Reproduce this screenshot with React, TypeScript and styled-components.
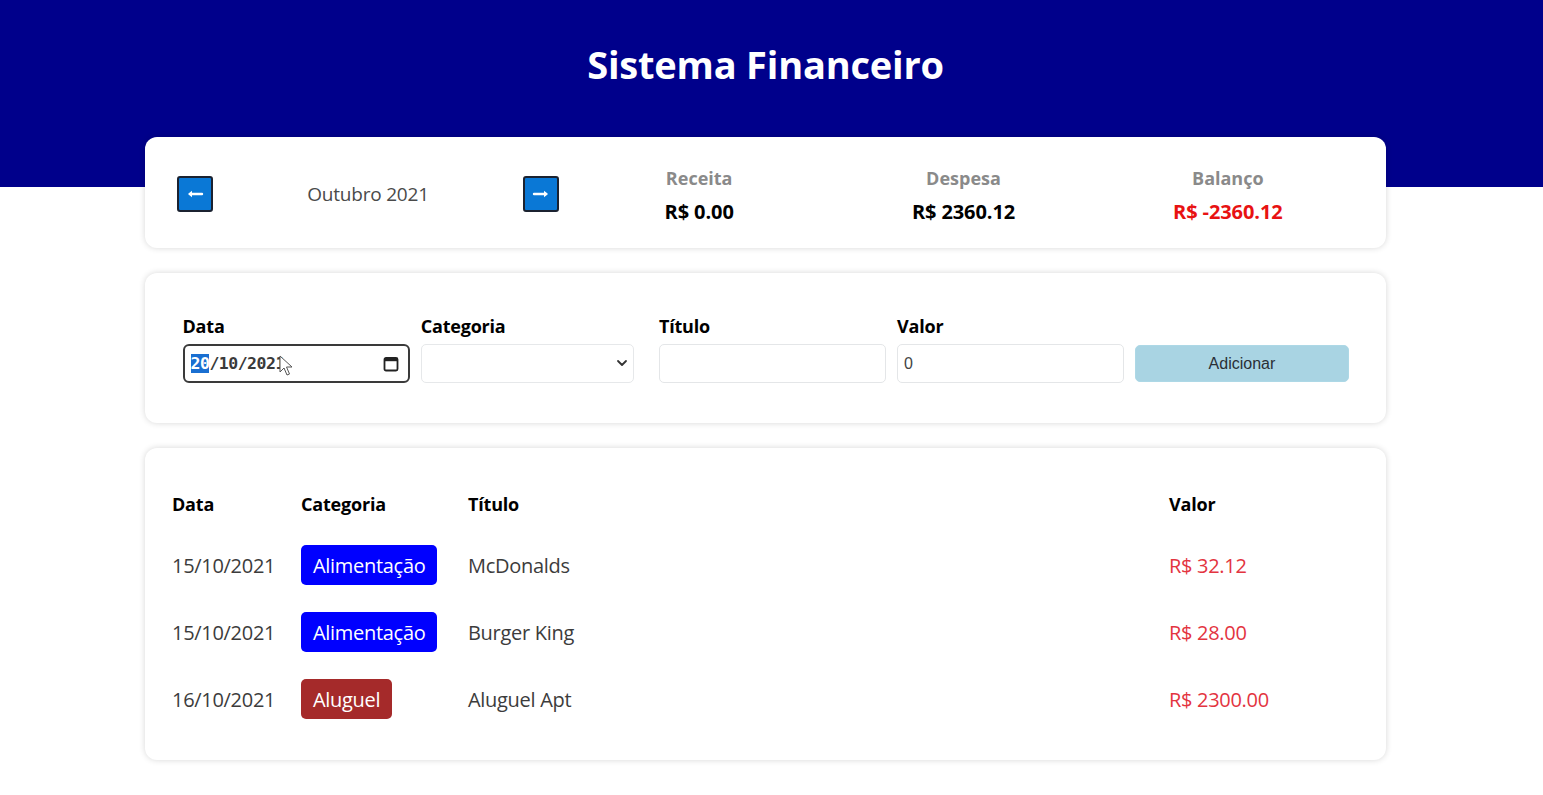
import React from "react";
import styled, { createGlobalStyle } from "styled-components";

const GlobalStyle = createGlobalStyle`
  html, body { margin: 0; padding: 0; background: #ffffff; }
  body { font-family: "Open Sans", "Noto Sans", Arial, sans-serif; color: #000; }
  * { box-sizing: border-box; }
`;

const Header = styled.header`
  background: #00008b;
  height: 187px;
  padding: 37px 12px 0 0;
  text-align: center;
`;

const HeaderTitle = styled.h1`
  margin: 0;
  color: #ffffff;
  font-size: 38px;
  font-weight: 700;
  line-height: 54px;
  letter-spacing: -0.2px;
`;

const Main = styled.main`
  padding-right: 12px;
`;

const Body = styled.div`
  width: 1241px;
  margin: -50px auto 40px;
  display: flex;
  flex-direction: column;
  gap: 25px;
`;

const Card = styled.section`
  background: #ffffff;
  border-radius: 12px;
  box-shadow: 0 0 6px rgba(0, 0, 0, 0.16);
`;

const InfoCard = styled(Card)`
  height: 111px;
  padding: 0 26px 0 30px;
  display: grid;
  grid-template-columns: 386px 1fr;
  column-gap: 6px;
  align-items: center;
`;

const MonthArea = styled.div`
  display: flex;
  align-items: center;
  padding-top: 2px;
`;

const MonthArrow = styled.div`
  width: 40px;
  display: flex;
  justify-content: center;
  cursor: pointer;
`;

const ArrowBox = styled.span`
  width: 36px;
  height: 36px;
  border-radius: 3px;
  background: #0a78d6;
  border: 2px solid #1b2230;
  display: flex;
  align-items: center;
  justify-content: center;
`;

const MonthTitle = styled.div`
  flex: 1;
  text-align: center;
  font-size: 19px;
  color: #4a4a4a;
  letter-spacing: -0.2px;
`;

const ResumeArea = styled.div`
  display: flex;
  padding-top: 4px;
`;

const ResumeItem = styled.div`
  flex: 1;
  text-align: center;
`;

const ResumeTitle = styled.div`
  font-size: 18px;
  line-height: 25px;
  font-weight: 700;
  color: #8a8a8a;
  margin-bottom: 8px;
`;

const ResumeValue = styled.div<{ $color?: string }>`
  font-size: 20px;
  line-height: 25px;
  font-weight: 700;
  color: ${(p) => p.$color || "#000"};
  letter-spacing: -0.1px;
`;

const InputCard = styled(Card)`
  padding: 25px;
  display: flex;
  align-items: center;
  height: 150px;
`;

const InputLabel = styled.label`
  flex: 1;
  margin: 12.5px;
  min-width: 0;
`;

const InputTitle = styled.div`
  font-size: 18px;
  font-weight: 700;
  line-height: 27px;
  margin-bottom: 4px;
  letter-spacing: -0.2px;
`;

const TextInput = styled.input`
  width: calc(100% + 14px);
  height: 39px;
  padding: 0 6px;
  border: 1px solid #e4e6e8;
  border-radius: 5px;
  font-family: Arial, "Liberation Sans", sans-serif;
  font-size: 16px;
  color: #444;
  outline: none;
  background: #fff;
`;

const DateField = styled.div`
  position: relative;
  width: calc(100% + 14px);
  height: 39px;
  border: 2px solid #3a3a3a;
  border-radius: 6px;
  display: flex;
  align-items: center;
  padding: 0 8px 0 6px;
  font-family: "DejaVu Sans Mono", monospace;
  font-size: 16.5px;
  font-weight: 600;
  color: #3a3a3a;
  letter-spacing: -0.5px;
`;

const Selected = styled.span`
  background: #1a6fd1;
  color: #fff;
`;

const DateText = styled.span`
  flex: 1;
`;

const Cursor = styled.svg`
  position: absolute;
  left: 94px;
  top: 9px;
`;

const SelectWrap = styled.div`
  position: relative;
  height: 39px;
`;

const Select = styled.select`
  width: 100%;
  height: 39px;
  appearance: none;
  border: 1px solid #e6e8ea;
  border-radius: 5px;
  background: #fff;
  padding: 0 6px;
  font-family: Arial, "Liberation Sans", sans-serif;
  font-size: 16px;
`;

const Chevron = styled.svg`
  position: absolute;
  right: 6px;
  top: 14px;
  pointer-events: none;
`;

const AddButton = styled.button`
  width: 100%;
  height: 37px;
  margin-top: 31px;
  border: 1px solid #add8e6;
  border-radius: 5px;
  background: #a9d4e3;
  font-family: Arial, "Liberation Sans", sans-serif;
  font-size: 16px;
  color: #2a2f36;
  cursor: pointer;
`;

const TableCard = styled(Card)`
  padding: 25px;
  height: 312px;
`;

const Table = styled.table`
  width: 100%;
  border-collapse: separate;
  border-spacing: 2.5px;
`;

const Th = styled.th<{ $w?: number }>`
  width: ${(p) => (p.$w ? `${p.$w}px` : "auto")};
  text-align: left;
  padding: 17px 0 14.5px;
  font-size: 18px;
  font-weight: 700;
  letter-spacing: -0.2px;
`;

const Td = styled.td<{ $color?: string }>`
  padding: 12.5px 0;
  font-size: 20px;
  color: ${(p) => p.$color || "#3c3c3c"};
  letter-spacing: -0.3px;
`;

const Badge = styled.span<{ $bg: string }>`
  display: inline-block;
  padding: 6.5px 12px;
  border-radius: 5px;
  background: ${(p) => p.$bg};
  color: #fff;
  font-size: 20px;
  line-height: 27px;
  letter-spacing: -0.3px;
`;

const items = [
  { date: "15/10/2021", cat: "Alimentação", bg: "#0000ff", title: "McDonalds", value: "R$ 32.12" },
  { date: "15/10/2021", cat: "Alimentação", bg: "#0000ff", title: "Burger King", value: "R$ 28.00" },
  { date: "16/10/2021", cat: "Aluguel", bg: "#a52a2a", title: "Aluguel Apt", value: "R$ 2300.00" },
];

const ArrowIcon = ({ dir }: { dir: "left" | "right" }) => (
  <svg width="20" height="10" viewBox="0 0 20 10">
    {dir === "left" ? (
      <>
        <path d="M5 5 H17" stroke="#fff" strokeWidth="2.4" strokeLinecap="round" />
        <path d="M3 5 L7 1.8 V8.2 Z" fill="#fff" />
      </>
    ) : (
      <>
        <path d="M3 5 H15" stroke="#fff" strokeWidth="2.4" strokeLinecap="round" />
        <path d="M17 5 L13 1.8 V8.2 Z" fill="#fff" />
      </>
    )}
  </svg>
);

export default function App() {
  return (
    <>
      <GlobalStyle />
      <Header>
        <HeaderTitle>Sistema Financeiro</HeaderTitle>
      </Header>
      <Main>
        <Body>
          <InfoCard>
            <MonthArea>
              <MonthArrow>
                <ArrowBox>
                  <ArrowIcon dir="left" />
                </ArrowBox>
              </MonthArrow>
              <MonthTitle>Outubro 2021</MonthTitle>
              <MonthArrow>
                <ArrowBox>
                  <ArrowIcon dir="right" />
                </ArrowBox>
              </MonthArrow>
            </MonthArea>
            <ResumeArea>
              <ResumeItem>
                <ResumeTitle>Receita</ResumeTitle>
                <ResumeValue>R$ 0.00</ResumeValue>
              </ResumeItem>
              <ResumeItem>
                <ResumeTitle>Despesa</ResumeTitle>
                <ResumeValue>R$ 2360.12</ResumeValue>
              </ResumeItem>
              <ResumeItem>
                <ResumeTitle>Balanço</ResumeTitle>
                <ResumeValue $color="#e81212">R$ -2360.12</ResumeValue>
              </ResumeItem>
            </ResumeArea>
          </InfoCard>

          <InputCard>
            <InputLabel>
              <InputTitle>Data</InputTitle>
              <DateField>
                <DateText>
                  <Selected>20</Selected>/10/2021
                </DateText>
                <svg width="18" height="18" viewBox="0 0 18 18">
                  <rect x="2.5" y="3" width="13" height="12.5" rx="1.5" fill="none" stroke="#222" strokeWidth="1.8" />
                  <rect x="2.5" y="3" width="13" height="3.2" fill="#222" />
                </svg>
                <Cursor width="14" height="22" viewBox="0 0 14 22">
                  <path d="M1 1 V17 L5 13 L8 20 L10.5 19 L7.5 12 H13 Z" fill="#fff" stroke="#555" strokeWidth="1" strokeLinejoin="round" />
                </Cursor>
              </DateField>
            </InputLabel>
            <InputLabel>
              <InputTitle>Categoria</InputTitle>
              <SelectWrap>
                <Select defaultValue="">
                  <option value=""></option>
                  <option value="food">Alimentação</option>
                  <option value="rent">Aluguel</option>
                  <option value="salary">Salário</option>
                </Select>
                <Chevron width="12" height="10" viewBox="0 0 12 10">
                  <path d="M2 3 L6 7 L10 3" fill="none" stroke="#333" strokeWidth="1.8" strokeLinecap="round" strokeLinejoin="round" />
                </Chevron>
              </SelectWrap>
            </InputLabel>
            <InputLabel>
              <InputTitle>Título</InputTitle>
              <TextInput type="text" />
            </InputLabel>
            <InputLabel>
              <InputTitle>Valor</InputTitle>
              <TextInput type="number" defaultValue={0} />
            </InputLabel>
            <InputLabel>
              <AddButton>Adicionar</AddButton>
            </InputLabel>
          </InputCard>

          <TableCard>
            <Table>
              <thead>
                <tr>
                  <Th $w={127}>Data</Th>
                  <Th $w={165}>Categoria</Th>
                  <Th>Título</Th>
                  <Th $w={190}>Valor</Th>
                </tr>
              </thead>
              <tbody>
                {items.map((it, i) => (
                  <tr key={i}>
                    <Td>{it.date}</Td>
                    <Td>
                      <Badge $bg={it.bg}>{it.cat}</Badge>
                    </Td>
                    <Td>{it.title}</Td>
                    <Td $color="#e3343f">{it.value}</Td>
                  </tr>
                ))}
              </tbody>
            </Table>
          </TableCard>
        </Body>
      </Main>
    </>
  );
}
